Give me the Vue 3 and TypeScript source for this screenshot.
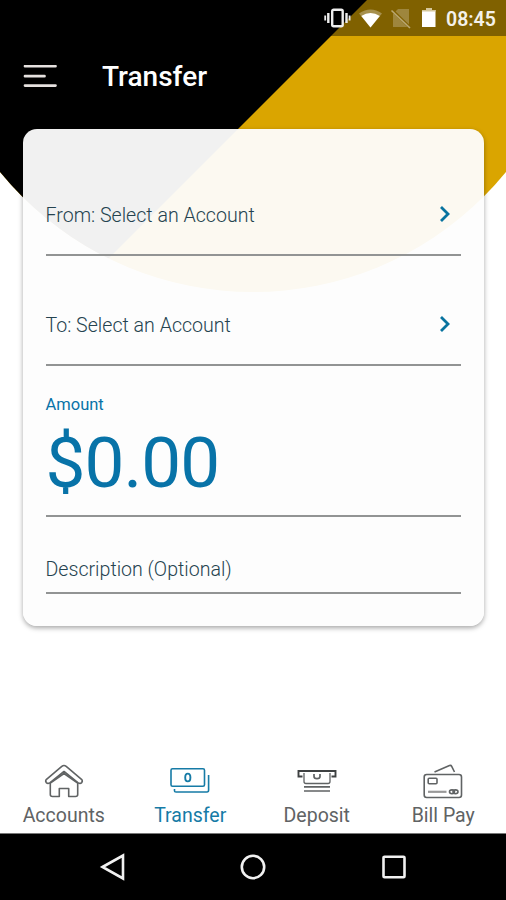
<script setup lang="ts">
import { ref } from 'vue'

type TabId = 'accounts' | 'transfer' | 'deposit' | 'billpay'

interface Tab {
  id: TabId
  label: string
}

const tabs: Tab[] = [
  { id: 'accounts', label: 'Accounts' },
  { id: 'transfer', label: 'Transfer' },
  { id: 'deposit', label: 'Deposit' },
  { id: 'billpay', label: 'Bill Pay' },
]

const activeTab = ref<TabId>('transfer')
const amount = ref(0)
</script>

<template>
  <div class="screen">
    <svg class="backdrop" viewBox="0 0 506 300" aria-hidden="true">
      <defs>
        <clipPath id="dome"><circle cx="253" cy="-34.7" r="326.7" /></clipPath>
      </defs>
      <g clip-path="url(#dome)">
        <path d="M0 0H506V300H0Z" fill="#daa500" />
        <path d="M0 0H367L67 300H0Z" fill="#000" />
      </g>
    </svg>

    <div class="status-bar">
      <svg class="status-icons" width="116" height="24" viewBox="0 0 116 24" aria-hidden="true">
        <g fill="none" stroke="#eee">
          <rect x="9.2" y="2.700" width="10.500" height="16.600" rx="1.5" stroke-width="2.4" />
          <path d="M5.300 6V16M23.500 6V16" stroke-width="2.400" />
          <path d="M2.200 8.500V13.500M26.600 8.500V13.500" stroke-width="1.8" />
        </g>
        <path d="M36 6.500Q47.500 -1.500 59 6.500L47.500 20.500Z" fill="#fff" opacity=".3" />
        <path d="M38.300 9Q47.500 3 56.800 9L47.500 20.500Z" fill="#fff" />
        <path d="M75 2H86V20H70V7Z" fill="#fff" opacity=".24" />
        <path d="M69 3L87 20.5" stroke="#816100" stroke-width="3" />
        <path d="M68.500 3.500L87 21" stroke="#fff" stroke-opacity=".45" stroke-width="1.6" />
        <path d="M103 1h6v2h3.500v17H99V3H103Z" fill="#fff" />
        <path d="M103 1h6v2h3.500v1.500H99V3h4Z" fill="#d5c79b" />
      </svg>
      <span class="clock">08:45</span>
    </div>

    <header class="app-bar">
      <button class="menu" aria-label="Menu">
        <svg width="34" height="24" viewBox="0 0 34 24">
          <path d="M2 1.200H32.500M2 11.200H21.500M2 20.600H32.500" stroke="#e6e1df" stroke-width="2.700" stroke-linecap="round" />
        </svg>
      </button>
      <h1>Transfer</h1>
    </header>

    <main class="card">
      <button class="field account from">
        <span class="from-label">From: Select an Account</span>
        <svg class="chevron" width="12" height="18" viewBox="0 0 12 18"><path d="M2 2L9 9L2 16" /></svg>
      </button>
      <button class="field account to">
        <span class="to-label">To: Select an Account</span>
        <svg class="chevron" width="12" height="18" viewBox="0 0 12 18"><path d="M2 2L9 9L2 16" /></svg>
      </button>
      <div class="field amount">
        <span class="amount-label">Amount</span>
        <span class="amount-value">${{ amount.toFixed(2) }}</span>
      </div>
      <div class="field description">
        <span>Description (Optional)</span>
      </div>
    </main>

    <nav class="tabs">
      <button
        v-for="tab in tabs"
        :key="tab.id"
        class="tab"
        :class="[tab.id, { active: tab.id === activeTab }]"
        @click="activeTab = tab.id"
      >
        <svg width="44" height="40" viewBox="0 0 44 40" aria-hidden="true">
          <g v-if="tab.id === 'accounts'" stroke-linejoin="round">
            <path d="M22 5.500Q23.100 5.500 24.200 6.400L39.500 19.300Q41 20.900 39.700 22.600Q38.200 24.200 36.200 22.800L22 11.500L7.800 22.800Q5.800 24.200 4.300 22.600Q3 20.900 4.500 19.300L19.800 6.400Q20.900 5.500 22 5.500Z" />
            <path d="M8.300 23.200V34.500Q8.300 36.500 10.500 36.500H17.300V28.500H26.700V36.500H33.500Q35.700 36.500 35.700 34.500V23.200L22 13.500Z" />
          </g>
          <g v-else-if="tab.id === 'transfer'">
            <rect x="3" y="8.800" width="33.500" height="17.500" rx="1.500" />
            <ellipse cx="19.800" cy="17.500" rx="2.600" ry="3.900" stroke-width="1.900" />
            <path d="M6.500 29V31Q6.500 32 8 32H39Q40.600 32 40.600 30V15" />
          </g>
          <g v-else-if="tab.id === 'deposit'">
            <path d="M7.500 16.500H3.500V11H40.500V16.500H36.500" stroke="#3e4142" stroke-width="1.900" />
            <path d="M9 13V21.500Q9 23.500 11 23.500H33Q35 23.500 35 21.500V13" stroke-width="1.300" />
            <path d="M19 14V16.200Q19 18.600 22 18.600Q25 18.600 25 16.200V14" stroke-width="1.700" />
            <path d="M9 26.800H35M9 31H35" stroke-width="1.700" />
          </g>
          <g v-else>
            <rect x="3.200" y="14.500" width="37.300" height="23" rx="2.500" />
            <path d="M13.500 12L28.500 5.500Q30 4.900 30.700 6.300L33.500 12" />
            <rect x="7.200" y="18.300" width="8.800" height="5.500" rx="1" />
            <path d="M7 31.800H25.500" stroke-width="2.200" stroke="#999" />
            <ellipse cx="31" cy="31.800" rx="2.500" ry="1.900" />
            <ellipse cx="34.500" cy="31.800" rx="2.500" ry="1.900" />
          </g>
        </svg>
        <span>{{ tab.label }}</span>
      </button>
    </nav>

    <footer class="system-nav">
      <svg width="28" height="28" viewBox="0 0 28 28"><path d="M3.500 14L24 2.500V25.500Z" /></svg>
      <svg width="28" height="28" viewBox="0 0 28 28"><circle cx="14" cy="14" r="11.200" /></svg>
      <svg width="28" height="28" viewBox="0 0 28 28"><rect x="3.500" y="3.700" width="21" height="20.500" rx="1" /></svg>
    </footer>
  </div>
</template>

<style>
body {
  margin: 0;
}
</style>

<style scoped>
.screen {
  position: relative;
  display: flex;
  flex-direction: column;
  width: 506px;
  height: 900px;
  overflow: hidden;
  background: #fff;
  font-family: Roboto, "Liberation Sans", sans-serif;
}
button {
  padding: 0;
  border: 0;
  background: none;
  font: inherit;
  color: inherit;
  text-align: left;
}
svg {
  display: block;
  flex: none;
}
.backdrop {
  position: absolute;
  top: 0;
  left: 0;
  width: 506px;
  height: 300px;
}
.status-bar {
  position: relative;
  box-sizing: border-box;
  display: flex;
  align-items: center;
  justify-content: flex-end;
  gap: 7px;
  flex: none;
  height: 36px;
  padding: 2px 10px 0 0;
  background: rgba(0, 0, 0, 0.41);
}
.clock {
  width: 50px;
  padding-top: 2px;
  font-size: 19.5px;
  font-weight: 600;
  line-height: 24px;
  color: #f4f1ea;
  white-space: nowrap;
}
.app-bar {
  position: relative;
  display: flex;
  align-items: center;
  gap: 45px;
  flex: none;
  height: 81px;
  padding: 0 0 12px 23px;
}
.menu {
  padding-top: 11px;
  margin-bottom: 10px;
}
h1 {
  margin: 0;
  font-size: 28px;
  font-weight: 500;
  line-height: 34px;
  color: #fff;
}
.card {
  position: relative;
  box-sizing: border-box;
  flex: none;
  width: 461px;
  height: 497px;
  margin-left: 23px;
  padding: 0 23px 0 22.5px;
  border-radius: 14px;
  background: rgba(253, 253, 253, 0.952);
  box-shadow: 0 2px 5px rgba(0, 0, 0, 0.35);
}
.field {
  box-sizing: border-box;
  display: flex;
  width: 100%;
  border-bottom: 2px solid #929494;
  font-size: 19.6px;
  font-weight: 300;
  line-height: 24px;
  color: #25434f;
  white-space: nowrap;
}
.account {
  align-items: flex-end;
  justify-content: space-between;
}
.from {
  height: 127px;
  padding-bottom: 26px;
}
.to {
  height: 110px;
  padding-bottom: 26px;
}
.chevron {
  margin: 0 10px 5px 0;
}
.chevron path {
  fill: none;
  stroke: #08739f;
  stroke-width: 2.8;
}
.amount {
  flex-direction: column;
  height: 151px;
  padding-top: 29px;
  color: #0873a8;
  font-weight: 400;
}
.amount-label {
  font-size: 16.5px;
  line-height: 20px;
}
.amount-value {
  margin-top: 6px;
  font-size: 71px;
  line-height: 84px;
  letter-spacing: -0.9px;
}
.description {
  align-items: flex-end;
  height: 77px;
  padding-bottom: 10px;
}
.tabs {
  display: grid;
  grid-template-columns: repeat(4, 126.5px);
  flex: 1;
  align-items: end;
  padding: 0 0 5px 0.5px;
}
.tab {
  display: flex;
  flex-direction: column;
  align-items: center;
  font-size: 19.5px;
  line-height: 24px;
  color: #606364;
}
.tab svg {
  margin-bottom: 4px;
  fill: none;
  stroke: currentColor;
  stroke-width: 1.6;
}
.tab.active {
  color: #167ba6;
}
.system-nav {
  box-sizing: border-box;
  display: flex;
  align-items: center;
  justify-content: center;
  gap: 112.5px;
  flex: none;
  height: 67px;
  border-top: 1px solid #777;
  background: #000;
}
.system-nav svg {
  fill: none;
  stroke: #f1f1f1;
  stroke-width: 2.6;
}
</style>
